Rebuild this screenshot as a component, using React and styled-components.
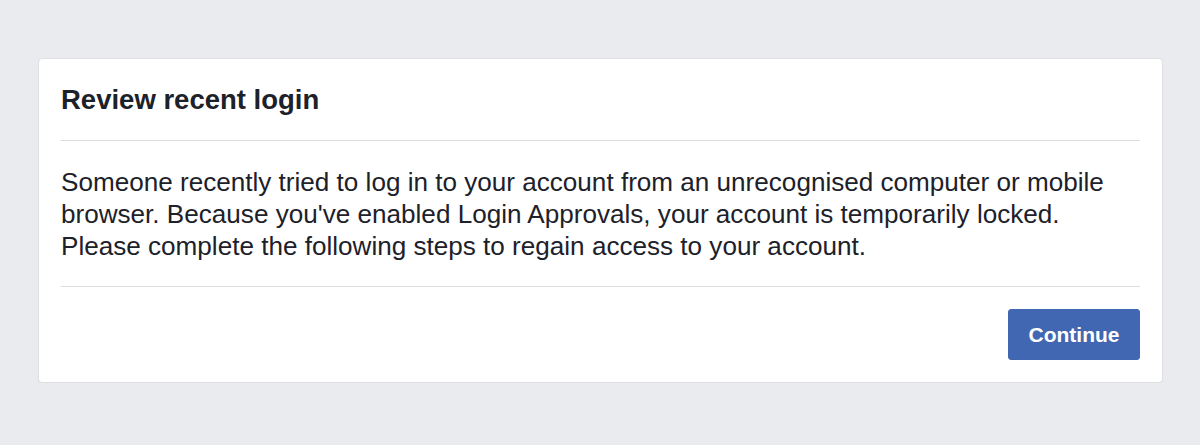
import React from "react";
import styled, { createGlobalStyle } from "styled-components";

const Global = createGlobalStyle`
  html, body {
    margin: 0;
    padding: 0;
    background: #e9ebee;
    font-family: "Liberation Sans", Arial, sans-serif;
  }
`;

const Page = styled.div`
  padding: 58px 37px 0 38px;
`;

const Card = styled.div`
  background: #fff;
  border: 1px solid #dddfe2;
  border-radius: 4px;
  box-shadow: 0 1px 1px rgba(0, 0, 0, 0.04);
`;

const Header = styled.div`
  margin: 0 22px;
  height: 81px;
  display: flex;
  align-items: center;
  border-bottom: 1px solid #dadde1;
`;

const Title = styled.h2`
  margin: 0;
  font-size: 27.5px;
  font-weight: bold;
  color: #1d2129;
`;

const Body = styled.div`
  margin: 0 22px;
  padding: 25px 0 24px;
  border-bottom: 1px solid #dadde1;
  font-size: 26.1px;
  line-height: 32px;
  color: #1d2129;
  white-space: nowrap;
`;

const Footer = styled.div`
  display: flex;
  justify-content: flex-end;
  padding: 22px 22px 22px;
`;

const Button = styled.button`
  height: 51px;
  width: 132px;
  padding: 0;
  border: 1px solid #4267b2;
  border-radius: 3px;
  background: #4267b2;
  color: #fff;
  font-family: "Liberation Sans", Arial, sans-serif;
  font-size: 21px;
  font-weight: bold;
  cursor: pointer;
`;

export default function App() {
  return (
    <Page>
      <Global />
      <Card>
        <Header>
          <Title>Review recent login</Title>
        </Header>
        <Body>
          Someone recently tried to log in to your account from an unrecognised computer or mobile
          <br />
          browser. Because you've enabled Login Approvals, your account is temporarily locked.
          <br />
          Please complete the following steps to regain access to your account.
        </Body>
        <Footer>
          <Button>Continue</Button>
        </Footer>
      </Card>
    </Page>
  );
}
